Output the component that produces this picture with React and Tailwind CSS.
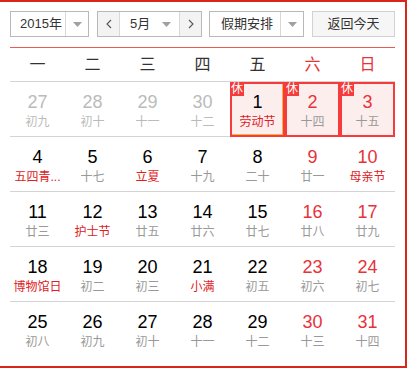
const font = { fontFamily: '"Liberation Sans", Arial, "Noto Sans CJK SC", sans-serif' };

const weeks = [
  [
    { d: 27, l: "初九", prev: true },
    { d: 28, l: "初十", prev: true },
    { d: 29, l: "十一", prev: true },
    { d: 30, l: "十二", prev: true },
    { d: 1, l: "劳动节", fest: true, rest: true, today: true },
    { d: 2, l: "十四", rest: true },
    { d: 3, l: "十五", rest: true },
  ],
  [
    { d: 4, l: "五四青...", fest: true },
    { d: 5, l: "十七" },
    { d: 6, l: "立夏", fest: true },
    { d: 7, l: "十九" },
    { d: 8, l: "二十" },
    { d: 9, l: "廿一" },
    { d: 10, l: "母亲节", fest: true },
  ],
  [
    { d: 11, l: "廿三" },
    { d: 12, l: "护士节", fest: true },
    { d: 13, l: "廿五" },
    { d: 14, l: "廿六" },
    { d: 15, l: "廿七" },
    { d: 16, l: "廿八" },
    { d: 17, l: "廿九" },
  ],
  [
    { d: 18, l: "博物馆日", fest: true },
    { d: 19, l: "初二" },
    { d: 20, l: "初三" },
    { d: 21, l: "小满", fest: true },
    { d: 22, l: "初五" },
    { d: 23, l: "初六" },
    { d: 24, l: "初七" },
  ],
  [
    { d: 25, l: "初八" },
    { d: 26, l: "初九" },
    { d: 27, l: "初十" },
    { d: 28, l: "十一" },
    { d: 29, l: "十二" },
    { d: 30, l: "十三" },
    { d: 31, l: "十四" },
  ],
];

const Caret = () => (
  <svg width="9" height="5" viewBox="0 0 9 5"><path d="M0 0h9L4.5 5z" fill="#a0a0a0" /></svg>
);

const Chevron = ({ right }) => (
  <svg width="6" height="10" viewBox="0 0 6 10">
    <path d={right ? "M1 1l4 4-4 4" : "M5 1L1 5l4 4"} fill="none" stroke="#555" strokeWidth="1.1" />
  </svg>
);

const Cell = ({ c, col, last }) => {
  const weekend = col >= 5;
  const numColor = c.prev ? "text-[#bbbbbb]" : weekend ? "text-[#e8323a]" : "text-black";
  const lunarColor = c.prev ? "text-[#bbbbbb]" : c.fest ? "text-[#e0201c]" : "text-[#999999]";

  if (c.rest) {
    return (
      <div className="relative h-[55px] border-2 border-[#f53b3b] bg-[#fdeeee] flex flex-col items-center pt-[8px]">
        {c.today && <div className="absolute right-0 bottom-0 left-0 top-0 border-r border-b border-[#f5b63a]"></div>}
        <span className="absolute -top-[2px] -left-[2px] w-[14px] h-[14px] bg-[#f53b3b] text-white text-[12px] leading-[14px] text-center">休</span>
        <span className={`text-[18px] leading-[20px] ${numColor}`}>{c.d}</span>
        <span className={`mt-[2px] text-[12px] leading-[16px] ${lunarColor}`}>{c.l}</span>
      </div>
    );
  }

  return (
    <div className={`h-[55px] flex flex-col items-center pt-[10px] ${last ? "" : "border-b border-[#d4d4d4]"}`}>
      <span className={`text-[18px] leading-[20px] ${numColor}`}>{c.d}</span>
      <span className={`mt-[2px] text-[12px] leading-[16px] whitespace-nowrap ${lunarColor}`}>{c.l}</span>
    </div>
  );
};

export default function App() {
  return (
    <div className="w-[407px] h-[368px] bg-white border-t-2 border-r-2 border-b-2 border-[#d9261c]" style={font}>
      <div className="pl-[10px] pt-[9px] w-[395px]">
        <div className="flex items-center h-[26px] text-[13px] text-[#333]">
          <div className="flex h-full w-[79px] border border-[#b8b8b8] bg-white">
            <div className="flex-1 flex items-center pl-[9px]">2015年</div>
            <div className="w-[23px] border-l border-[#d8d8d8] flex items-center justify-center"><Caret /></div>
          </div>

          <div className="flex h-full w-[105px] ml-[8px] border border-[#b8b8b8] bg-white">
            <div className="w-[22px] bg-[#f3f3f3] border-r border-[#d8d8d8] flex items-center justify-center"><Chevron /></div>
            <div className="flex-1 flex items-center justify-between pl-[10px] pr-[8px]">
              <span>5月</span>
              <Caret />
            </div>
            <div className="w-[22px] bg-[#f3f3f3] border-l border-[#d8d8d8] flex items-center justify-center"><Chevron right /></div>
          </div>

          <div className="flex h-full w-[95px] ml-[7px] border border-[#b8b8b8] bg-white">
            <div className="flex-1 flex items-center pl-[11px]">假期安排</div>
            <div className="w-[23px] border-l border-[#d8d8d8] flex items-center justify-center"><Caret /></div>
          </div>

          <div className="h-full w-[83px] ml-auto border border-[#d2d2d2] bg-[#f6f6f6] flex items-center justify-center">返回今天</div>
        </div>

        <div className="mt-[10px] h-px bg-[#ea5a4e]"></div>

        <div className="grid grid-cols-7 h-[34px] border-b border-[#d4d4d4] text-[16px] text-[#333]">
          {["一", "二", "三", "四", "五", "六", "日"].map((w, i) => (
            <div key={w} className={`flex items-center justify-center ${i >= 5 ? "text-[#e8323a]" : ""}`}>{w}</div>
          ))}
        </div>

        {weeks.map((row, r) => (
          <div key={r} className="grid grid-cols-7">
            {row.map((c, i) => (
              <Cell key={i} c={c} col={i} last={r === weeks.length - 1} />
            ))}
          </div>
        ))}
      </div>
    </div>
  );
}
